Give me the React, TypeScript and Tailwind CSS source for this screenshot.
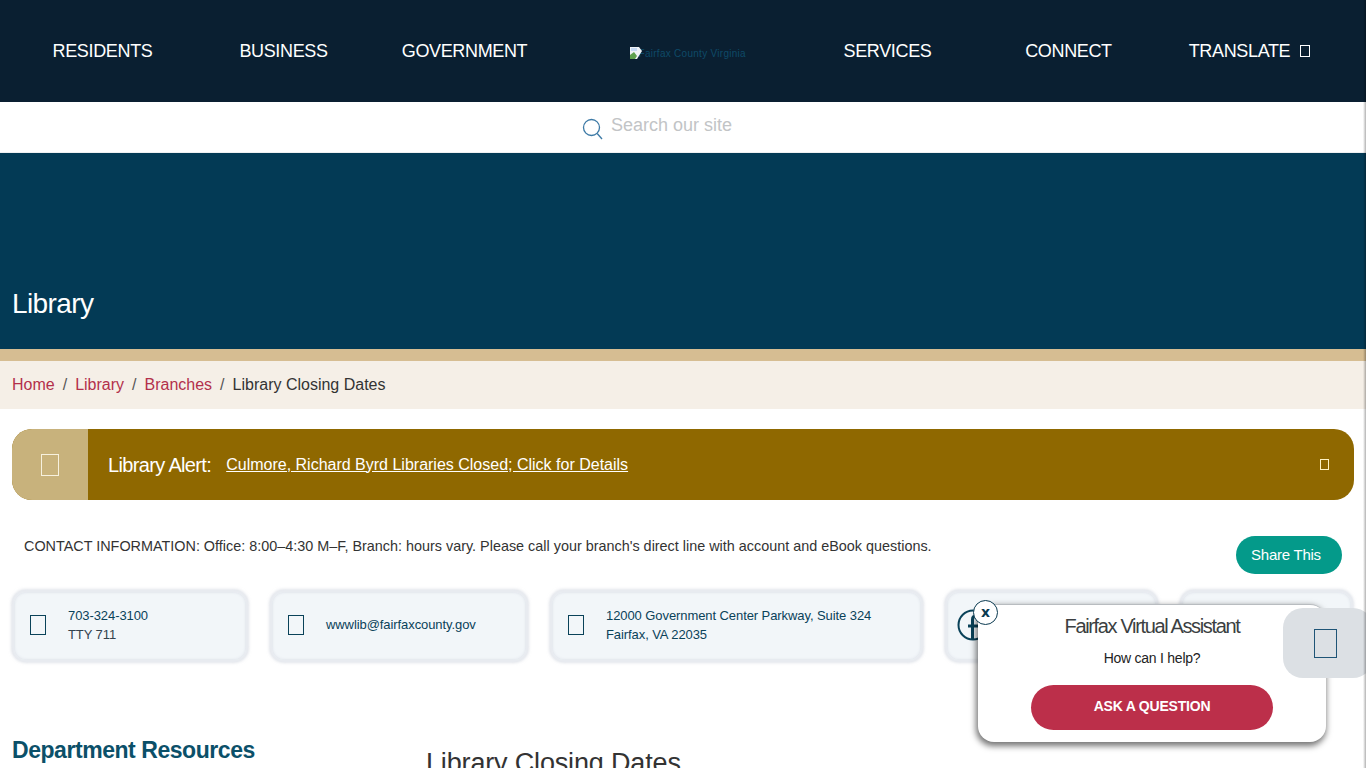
import React from 'react';

function Tofu({ className }: { className: string }) {
  return <span className={'block shrink-0 border ' + className} />;
}

function NavItem({ label, children }: { label: string; children?: React.ReactNode }) {
  return (
    <a className="w-[181px] flex items-center justify-center text-[18px] tracking-[-0.35px] text-white">
      {label}
      {children}
    </a>
  );
}

function InfoCard({ width, children }: { width: string; children: React.ReactNode }) {
  return (
    <div className={'h-[72px] shrink-0 flex items-center rounded-[14px] bg-[#f2f6f9] border-[2px] border-[#e8ebf0] shadow-[inset_0_0_3px_rgba(205,210,220,0.8),0_0_3px_1px_rgba(200,205,216,0.55)] text-[13px] leading-[19px] tracking-[-0.08px] text-[#0a4259] pb-[2px] ' + width}>
      {children}
    </div>
  );
}

export default function App() {
  return (
    <div className="relative w-[1366px] h-[768px] overflow-hidden bg-white font-['Liberation_Sans',Arial,sans-serif]">
      <header className="h-[102px] bg-[#0a1f31] flex pl-[12px]">
        <NavItem label="RESIDENTS" />
        <NavItem label="BUSINESS" />
        <NavItem label="GOVERNMENT" />
        <div className="w-[242px] pl-[75px] flex items-center pt-[5px]">
          <span className="flex items-center text-[10px] tracking-[0.28px] text-[#0e4a68]">
            <svg width="12" height="12" viewBox="0 0 12 12" className="relative shrink-0 mt-[-2px]">
              <path d="M0 0H9L12 4L7 12H0Z" fill="#eef2f6" />
              <path d="M0 12V8L4 5L7 9L5 12Z" fill="#5da04e" />
              <path d="M1 1H7V4H1Z" fill="#c5d8f2" />
            </svg>
            <span className="ml-[-3.5px]">Fairfax County Virginia</span>
          </span>
        </div>
        <NavItem label="SERVICES" />
        <NavItem label="CONNECT" />
        <NavItem label="TRANSLATE">
          <Tofu className="w-[10px] h-[12px] ml-[10px] border-white" />
        </NavItem>
      </header>

      <div className="h-[51px] bg-white border-b border-[#eef0f2] flex items-center pl-[582px]">
        <svg width="22" height="22" viewBox="0 0 22 22" fill="none" stroke="#3d7aa6" strokeWidth="1.3" className="mt-[4px]">
          <circle cx="9.5" cy="9.5" r="8" />
          <path d="M15.2 15.5L20 21" />
        </svg>
        <span className="ml-[7px] text-[18px] text-[#c2c4c6] pb-[4px]">Search our site</span>
      </div>

      <section className="h-[196px] bg-[#033a55] flex items-end px-[12px] pb-[27px]">
        <h1 className="text-[28px] leading-[36px] tracking-[-0.6px] text-white">Library</h1>
      </section>
      <div className="h-[12px] bg-[#d6bd92]" />

      <nav className="h-[48px] bg-[#f5efe7] flex items-center px-[12px] text-[16px] text-[#b3304b]">
        <a>Home</a>
        <span className="mx-[8px] text-[#555]">/</span>
        <a>Library</a>
        <span className="mx-[8px] text-[#555]">/</span>
        <a>Branches</a>
        <span className="mx-[8px] text-[#555]">/</span>
        <span className="text-[#333]">Library Closing Dates</span>
      </nav>

      <div className="mt-[20px] mx-[12px] h-[71px] rounded-[20px] overflow-hidden bg-[#8f6800] flex items-center">
        <div className="w-[76px] h-full bg-[#c8b27c] flex items-center justify-center shrink-0">
          <Tofu className="w-[18px] h-[22px] border-[#f7f1df]" />
        </div>
        <span className="ml-[20px] text-[20px] tracking-[-0.65px] text-white">Library Alert:</span>
        <a className="ml-[15px] text-[16px] text-white underline">Culmore, Richard Byrd Libraries Closed; Click for Details</a>
        <Tofu className="ml-auto mr-[25px] w-[9px] h-[11px] border-[#fff3c4]" />
      </div>

      <div className="h-[90px] flex justify-between px-[12px]">
        <p className="ml-[12px] mt-[38px] text-[14.4px] leading-[17px] text-[#333]">
          CONTACT INFORMATION: Office: 8:00–4:30 M–F, Branch: hours vary. Please call your branch's direct line with account and eBook questions.
        </p>
        <a className="mr-[12px] mt-[36px] w-[106px] h-[38px] pr-[6px] rounded-full bg-[#049a8a] text-white text-[15px] tracking-[-0.25px] flex items-center justify-center">
          Share This
        </a>
      </div>

      <div className="flex gap-[22px] pl-[12px]">
        <InfoCard width="w-[236px]">
          <Tofu className="ml-[16px] w-[16px] h-[20px] border-[#0a4259]" />
          <div className="ml-[22px]">
            703-324-3100
            <br />
            <span className="text-[#33424d]">TTY 711</span>
          </div>
        </InfoCard>
        <InfoCard width="w-[258px]">
          <Tofu className="ml-[16px] w-[16px] h-[20px] border-[#0a4259]" />
          <div className="ml-[22px] pb-[2px]">wwwlib@fairfaxcounty.gov</div>
        </InfoCard>
        <InfoCard width="w-[373px]">
          <Tofu className="ml-[16px] w-[16px] h-[20px] border-[#0a4259]" />
          <div className="ml-[22px]">
            12000 Government Center Parkway, Suite 324
            <br />
            Fairfax, VA 22035
          </div>
        </InfoCard>
        <InfoCard width="w-[213px]">
          <svg width="32" height="32" viewBox="0 0 32 32" fill="none" stroke="#0a4259" className="ml-[10px]">
            <circle cx="16" cy="16" r="14.5" strokeWidth="2" />
            <path d="M22 7h-3c-2 0-3.500 1.400-3.500 3.500V30" strokeWidth="3" />
            <path d="M11 17h10" strokeWidth="3" />
          </svg>
        </InfoCard>
        <InfoCard width="w-[173px]">
          <span />
        </InfoCard>
      </div>

      <div className="flex pl-[12px] mt-[73px]">
        <h2 className="w-[414px] text-[23px] leading-[30px] font-bold tracking-[-0.45px] text-[#0b5069]">Department Resources</h2>
        <h1 className="mt-[11px] text-[27px] leading-[34px] tracking-[-0.16px] text-[#333]">Library Closing Dates</h1>
      </div>

      <div className="absolute left-[978px] top-[604px] w-[348px] h-[138px] rounded-[16px] bg-white border-t border-[#b8bcc0] shadow-[-1px_3px_6px_1px_rgba(0,0,0,0.55)] flex flex-col items-center">
        <div className="mt-[8px] text-[20px] leading-[26px] tracking-[-1.35px] text-[#3b3f42]">Fairfax Virtual Assistant</div>
        <div className="mt-[10px] text-[14px] leading-[18px] tracking-[-0.25px] text-[#222]">How can I help?</div>
        <a className="mt-[18px] w-[242px] h-[45px] rounded-full bg-[#bc2f4a] text-white text-[14px] font-bold tracking-[-0.2px] flex items-center justify-center pb-[2px]">ASK A QUESTION</a>
      </div>
      <button className="absolute left-[973px] top-[600px] w-[25px] h-[25px] pb-[2px] rounded-full bg-white border border-[#0a3a50] text-[#0a3a50] text-[14px] leading-none font-bold flex items-center justify-center font-['DejaVu_Sans',sans-serif]">
        x
      </button>

      <div className="absolute left-[1283px] top-[608px] w-[90px] h-[70px] rounded-[20px] bg-[#dce0e4] flex items-center pl-[31px]">
        <Tofu className="w-[23px] h-[29px] border-[1.5px] border-[#1e5476]" />
      </div>

      <div className="absolute right-0 top-0 w-[3px] h-full bg-gradient-to-r from-transparent to-[rgba(0,0,0,0.3)]" />
    </div>
  );
}
